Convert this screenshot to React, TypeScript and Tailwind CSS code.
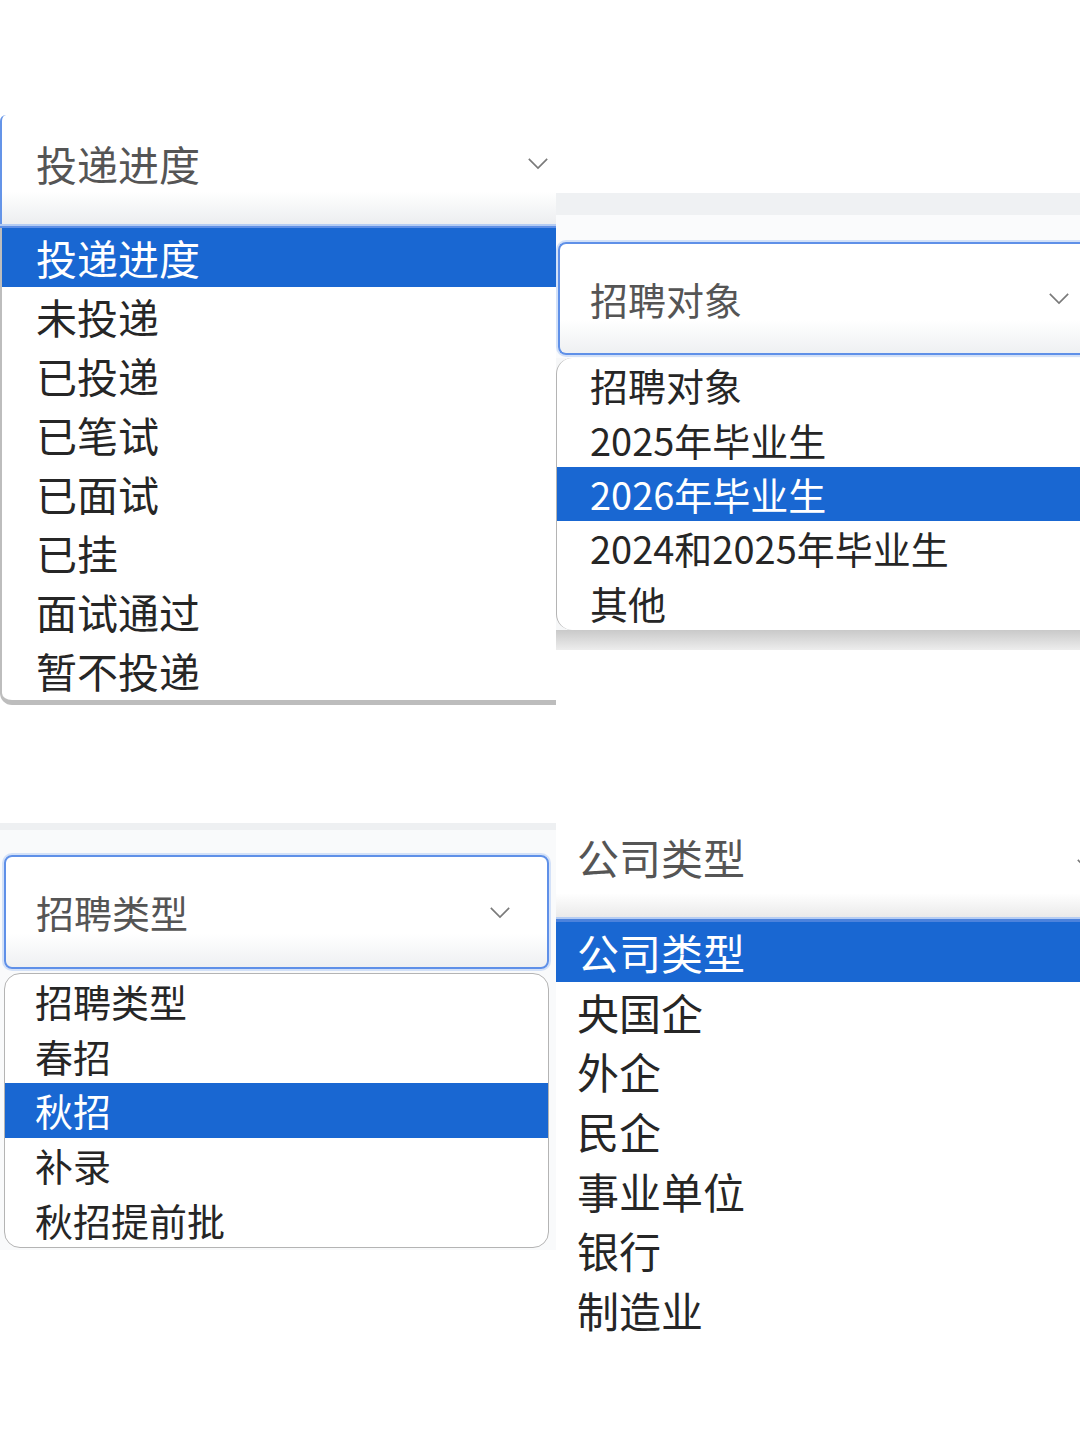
import type { ReactNode } from "react";

type Opt = { label: string; on?: boolean };

const progress: Opt[] = [
  { label: "投递进度", on: true },
  { label: "未投递" },
  { label: "已投递" },
  { label: "已笔试" },
  { label: "已面试" },
  { label: "已挂" },
  { label: "面试通过" },
  { label: "暂不投递" },
];

const target: Opt[] = [
  { label: "招聘对象" },
  { label: "2025年毕业生" },
  { label: "2026年毕业生", on: true },
  { label: "2024和2025年毕业生" },
  { label: "其他" },
];

const kind: Opt[] = [
  { label: "招聘类型" },
  { label: "春招" },
  { label: "秋招", on: true },
  { label: "补录" },
  { label: "秋招提前批" },
];

const company: Opt[] = [
  { label: "公司类型", on: true },
  { label: "央国企" },
  { label: "外企" },
  { label: "民企" },
  { label: "事业单位" },
  { label: "银行" },
  { label: "制造业" },
];

function Chevron({ className }: { className?: string }) {
  return (
    <svg viewBox="0 0 24 14" className={className} fill="none" stroke="currentColor" strokeWidth={1.8}>
      <polyline points="2,2 12,12 22,2" />
    </svg>
  );
}

// rows of an opened native select
function Rows({ items, row }: { items: Opt[]; row: string }) {
  return (
    <>
      {items.map((o) => (
        <div
          key={o.label}
          className={`${row} flex items-center leading-none ${
            o.on ? "bg-[#1967d2] text-white" : "text-[#262626]"
          }`}
        >
          {o.label}
        </div>
      ))}
    </>
  );
}

function Panel({ className, children }: { className: string; children: ReactNode }) {
  return <div className={`flex flex-col shrink-0 ${className}`}>{children}</div>;
}

export default function App() {
  return (
    <div className="w-[1080px] h-[1440px] bg-white overflow-hidden font-['Noto_Sans_CJK_SC',sans-serif]">
      <div className="flex items-start">
        {/* 投递进度 */}
        <Panel className="w-[556px] mt-[115px] bg-white">
          <div className="h-[109px] flex items-center justify-between pl-[34px] pr-[7px] pb-[12px] border-l-2 border-[#6494e8] rounded-tl-md bg-gradient-to-b from-white from-70% to-[#eceef0]">
            <span className="text-[41px] leading-none text-[#555]">投递进度</span>
            <Chevron className="w-[22px] h-[13px] text-[#7a7a7a]" />
          </div>
          <div className="h-[2px] bg-[#b4ccf3]" />
          <div className="h-[2px] bg-[#5f90e6]" />
          <div className="border-l-2 border-b-[5px] border-[#bdbdbd] rounded-bl-xl bg-white overflow-hidden">
            <Rows items={progress} row="h-[59px] pl-[34px] text-[41px]" />
          </div>
        </Panel>

        {/* 招聘对象 */}
        <Panel className="w-[524px] mt-[193px] bg-[#f6f7f8]">
          <div className="h-[22px] bg-[#eff1f3]" />
          <div className="bg-[#fafbfc] pt-[27px] pb-[3px] pl-[2px]">
            <div className="h-[113px] flex items-center justify-between pl-[30px] pr-[10px] border-2 border-r-0 border-[#5f90e8] rounded-l-lg shadow-[0_0_0_2px_#d3e1f8] bg-gradient-to-b from-white from-70% to-[#eef0f2]">
              <span className="text-[38px] leading-none text-[#555]">招聘对象</span>
              <Chevron className="w-[22px] h-[13px] text-[#7a7a7a]" />
            </div>
          </div>
          <div className="border-l-[1.5px] border-[#b4b4b4] rounded-l-2xl bg-white overflow-hidden">
            <Rows items={target} row="h-[54.4px] pl-[33px] text-[38px]" />
          </div>
          <div className="h-[20px] bg-gradient-to-b from-[#c9c9c9] to-[#ededed]" />
        </Panel>
      </div>

      <div className="flex items-start">
        {/* 招聘类型 */}
        <Panel className="w-[556px] mt-[118px] bg-[#f9fafb]">
          <div className="h-[7px] bg-[#eef0f2]" />
          <div className="pt-[25px] pl-[4px] pr-[7px] pb-[2px]">
            <div className="h-[114px] flex items-center justify-between pl-[30px] pr-[36px] border-2 border-[#5f90e8] rounded-lg shadow-[0_0_0_2px_#d3e1f8] bg-gradient-to-b from-white from-70% to-[#eef0f2]">
              <span className="text-[38px] leading-none text-[#555]">招聘类型</span>
              <Chevron className="w-[22px] h-[13px] text-[#7a7a7a]" />
            </div>
            <div className="mt-[4px] border-[1.5px] border-[#b4b4b4] rounded-2xl bg-white overflow-hidden">
              <Rows items={kind} row="h-[54.6px] pl-[30px] text-[38px]" />
            </div>
          </div>
        </Panel>

        {/* 公司类型 */}
        <Panel className="w-[524px] mt-[117px] bg-white">
          <div className="h-[95px] flex items-start justify-between pl-[21px] pt-[14px] bg-gradient-to-b from-white from-75% to-[#eaeaea]">
            <span className="text-[42px] leading-none text-[#555]">公司类型</span>
            <div className="w-[4px] mt-[22px] overflow-hidden">
              <Chevron className="w-[22px] h-[13px] text-[#7a7a7a]" />
            </div>
          </div>
          <div className="h-[2px] bg-[#b4ccf3]" />
          <div className="h-[3px] bg-[#4c82dc]" />
          <Rows items={company} row="h-[59.7px] pl-[21px] text-[42px]" />
        </Panel>
      </div>
    </div>
  );
}
